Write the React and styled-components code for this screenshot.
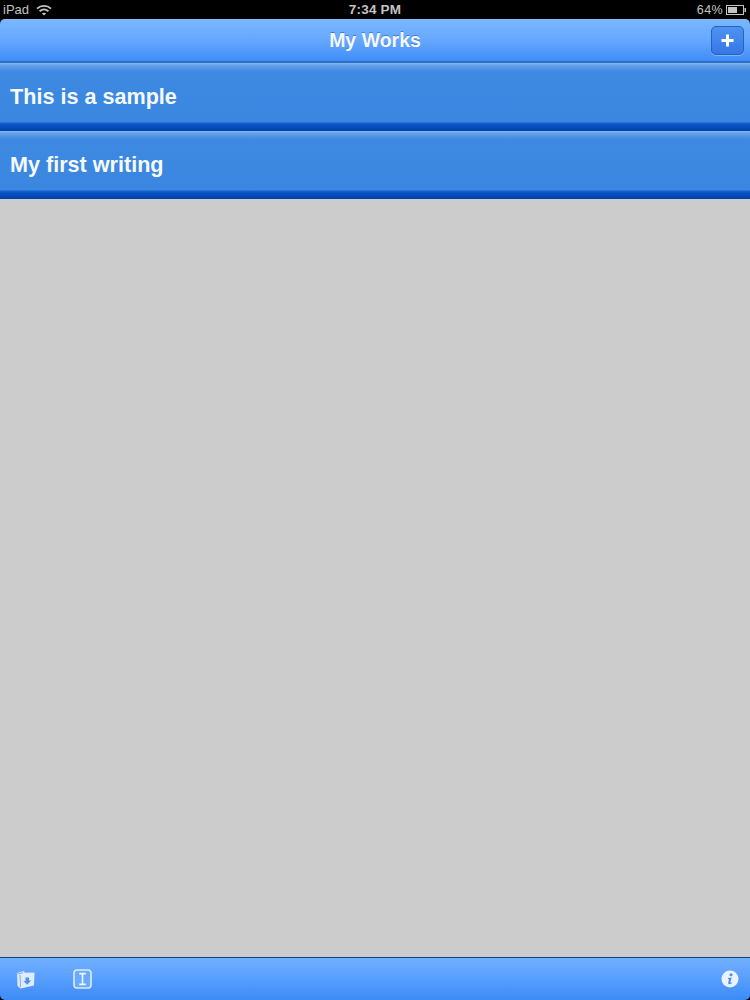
import React from "react";
import styled, { createGlobalStyle } from "styled-components";

const Global = createGlobalStyle`
  html, body { margin: 0; padding: 0; background: #000; }
  body { font-family: "Liberation Sans", Arial, sans-serif; }
`;

const Screen = styled.div`
  width: 750px;
  height: 1000px;
  display: flex;
  flex-direction: column;
  background: #000;
  overflow: hidden;
`;

const StatusBar = styled.div`
  height: 19px;
  flex: none;
  background: #000;
  color: #c4c4c4;
  display: grid;
  grid-template-columns: 1fr auto 1fr;
  align-items: center;
  padding: 0 3px;
  font-size: 13px;
  font-weight: 400;
  box-sizing: border-box;
`;

const StatusLeft = styled.div`
  display: flex;
  align-items: center;
  gap: 7px;
`;

const Clock = styled.div`
  font-weight: 700;
  font-size: 13.5px;
  letter-spacing: 0.2px;
`;

const StatusRight = styled.div`
  display: flex;
  align-items: center;
  justify-content: flex-end;
  gap: 3px;
  font-size: 12.5px;
  letter-spacing: 0.4px;
`;

const NavBar = styled.header`
  position: relative;
  height: 44px;
  flex: none;
  box-sizing: border-box;
  border-top: 1px solid #8fb9ee;
  border-bottom: 2px solid #2a6ec8;
  border-radius: 5px 5px 0 0;
  background: linear-gradient(#79b6ff 0%, #68a9ff 45%, #3f8df8 100%);
  display: flex;
  align-items: center;
  justify-content: center;
`;

const Title = styled.h1`
  margin: 0;
  font-size: 19.5px;
  font-weight: 700;
  color: #f4f9ff;
  text-shadow: 0 -1px 0 rgba(40, 90, 170, 0.6);
`;

const AddButton = styled.button`
  position: absolute;
  right: 6px;
  top: 6px;
  width: 33px;
  height: 29px;
  padding: 0;
  box-sizing: border-box;
  border: 1px solid #2c62b4;
  border-radius: 5px;
  background: linear-gradient(#4f92f2, #3577e6);
  box-shadow: 0 1px 0 rgba(170, 210, 255, 0.5);
  display: flex;
  align-items: center;
  justify-content: center;
`;

const List = styled.main`
  flex: 1;
  display: flex;
  flex-direction: column;
  background: #cccccc;
`;

const Row = styled.div`
  height: 68px;
  box-sizing: border-box;
  display: flex;
  align-items: center;
  padding: 0 10px;
  background: linear-gradient(
    #8ab8f0 0,
    #6aa2e8 2px,
    #3e8ae2 8px,
    #3a86e0 59px,
    #1462d0 60px,
    #0a52c4 62px,
    #0042ac 68px
  );
  color: #f6faff;
  font-size: 21.6px;
  font-weight: 700;
`;

const Toolbar = styled.footer`
  height: 43px;
  flex: none;
  box-sizing: border-box;
  border-top: 1px solid #123f78;
  border-radius: 0 0 5px 5px;
  background: linear-gradient(#72b0ff 0%, #5aa0ff 45%, #3c8bf6 100%);
  display: flex;
  align-items: center;
  padding: 0 11px 0 16px;
`;

const ToolIcon = styled.div`
  display: flex;
  margin-right: ${(p) => p.$gap || 0}px;
`;

const Spacer = styled.div`
  flex: 1;
`;

const Wifi = () => (
  <svg width="16" height="12" viewBox="0 0 16 12" fill="none" stroke="#c4c4c4" strokeWidth="1.8">
    <path d="M1 4.6 C5 1 11 1 15 4.6" />
    <path d="M3.6 7.2 C6.2 5 9.8 5 12.4 7.2" />
    <path d="M8 11.5 L5.8 9.3 C7 8.4 9 8.4 10.2 9.3 Z" fill="#c4c4c4" stroke="none" />
  </svg>
);

const Battery = () => (
  <svg width="21" height="10" viewBox="0 0 21 10">
    <rect x="0.5" y="0.5" width="17" height="9" fill="none" stroke="#c4c4c4" />
    <rect x="2" y="2" width="9" height="6" fill="#c4c4c4" />
    <path d="M18.5 3 H20 V7 H18.5 Z" fill="#c4c4c4" />
  </svg>
);

const Plus = () => (
  <svg width="15" height="15" viewBox="0 0 15 15">
    <path d="M6 1.5 H9 V6 H13.5 V9 H9 V13.5 H6 V9 H1.5 V6 H6 Z" fill="#fff" />
  </svg>
);

const FolderIcon = () => (
  <svg width="19" height="19" viewBox="0 0 19 19">
    <path d="M1 3 L7.5 1 L9 2.8 L18.5 2.5 L18 15.5 L4.5 18.5 L1.5 16 Z" fill="#dfecff" />
    <path d="M4 5 L4.5 17 M1.5 4 L7 2.6" stroke="#72adf8" strokeWidth="1" fill="none" />
    <path d="M9.5 7.5 H13 V10.5 H15.2 L11.2 14.8 L7.5 11 H9.5 Z" fill="#4f92ee" />
  </svg>
);

const TextIcon = () => (
  <svg width="19" height="20" viewBox="0 0 19 20">
    <rect x="1" y="1" width="17" height="18" rx="3" fill="#6aaafb" stroke="#dcebff" strokeWidth="1.6" />
    <path d="M6.2 4.6 H12.8 M6.2 15.4 H12.8 M9.5 4.6 V15.4" stroke="#eef6ff" strokeWidth="1.6" fill="none" />
  </svg>
);

const InfoIcon = () => (
  <svg width="18" height="18" viewBox="0 0 18 18">
    <circle cx="9" cy="9" r="8.5" fill="#eaf3ff" />
    <circle cx="10" cy="4.8" r="1.5" fill="#4a8eea" />
    <path
      d="M7 8 L10.6 7.4 L9.4 12.6 C9.3 13.2 9.8 13.2 10.8 12.6 L10.9 13.3 C9.6 14.4 6.9 14.9 7.2 13 L8 9.2 L7 9 Z"
      fill="#4a8eea"
    />
  </svg>
);

export default function App() {
  return (
    <Screen>
      <Global />
      <StatusBar>
        <StatusLeft>
          iPad
          <Wifi />
        </StatusLeft>
        <Clock>7:34 PM</Clock>
        <StatusRight>
          64%
          <Battery />
        </StatusRight>
      </StatusBar>
      <NavBar>
        <Title>My Works</Title>
        <AddButton aria-label="Add">
          <Plus />
        </AddButton>
      </NavBar>
      <List>
        <Row>This is a sample</Row>
        <Row>My first writing</Row>
      </List>
      <Toolbar>
        <ToolIcon $gap={38}>
          <FolderIcon />
        </ToolIcon>
        <ToolIcon>
          <TextIcon />
        </ToolIcon>
        <Spacer />
        <ToolIcon>
          <InfoIcon />
        </ToolIcon>
      </Toolbar>
    </Screen>
  );
}
